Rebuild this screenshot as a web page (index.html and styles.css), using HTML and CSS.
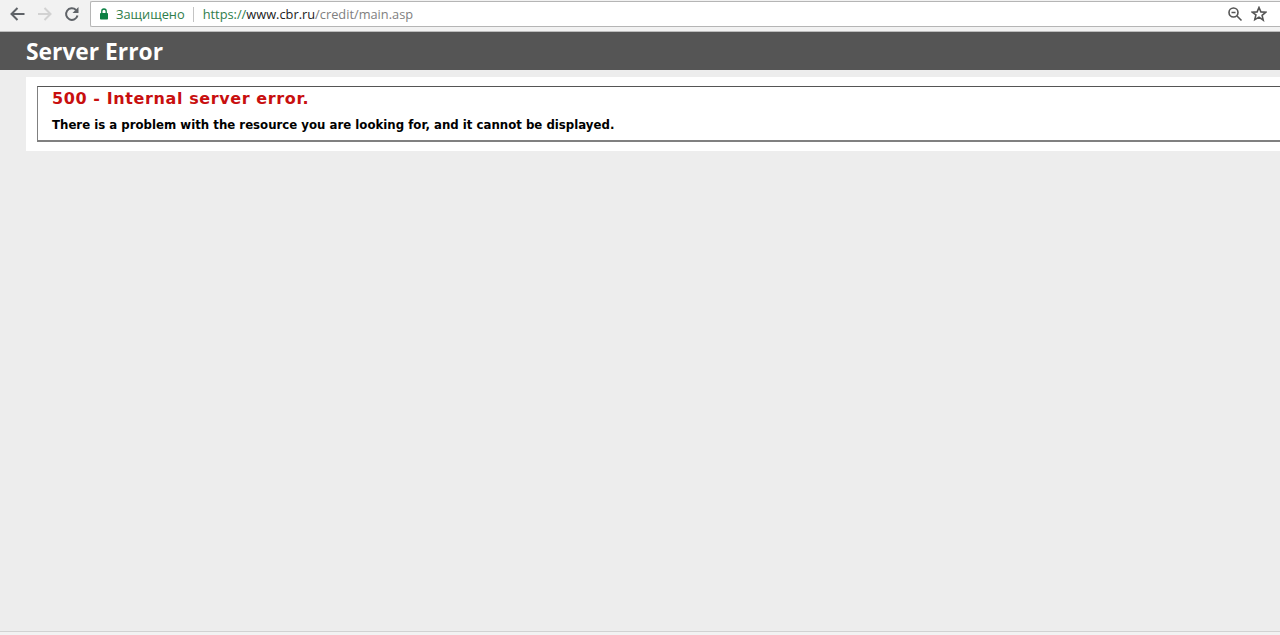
FILE: index.html
```html
<!DOCTYPE html>
<html lang="en">
<head>
<meta charset="utf-8">
<title>Server Error</title>
<link rel="stylesheet" href="styles.css">
</head>
<body>
<div class="toolbar">
  <svg class="nav-icon" width="16" height="16" viewBox="0 0 16 16"><path d="M15.500 8H3M8.500 2L2.500 8l6 6" fill="none" stroke="#5f6368" stroke-width="2"/></svg>
  <svg class="nav-icon" width="16" height="16" viewBox="0 0 16 16"><path d="M1 8h12M7.500 2l6 6-6 6" fill="none" stroke="#d2d2d2" stroke-width="2"/></svg>
  <svg class="nav-icon reload" width="16" height="16" viewBox="0 0 16 16"><path d="M13.500 9.500A5.800 5.800 0 1 1 12 4" fill="none" stroke="#5f6368" stroke-width="2"/><path d="M14.500 1v6h-6z" fill="#5f6368"/></svg>
  <div class="omnibox">
    <svg class="lock" width="10" height="12" viewBox="0 0 10 12"><path d="M2.800 5V3.200a2.200 2.200 0 0 1 4.400 0V5" fill="none" stroke="#0b8043" stroke-width="1.300"/><rect x="1" y="5" width="8" height="6.500" rx=".8" fill="#0b8043"/></svg>
    <span class="secure">Защищено</span>
    <span class="url"><span class="scheme">https://</span><span class="host">www.cbr.ru</span><span class="path">/credit/main.asp</span></span>
    <svg class="end-icon" width="16" height="16" viewBox="0 0 16 16"><circle cx="6.500" cy="6.500" r="4.500" fill="none" stroke="#555" stroke-width="1.600"/><path d="M10 10l4.500 4.500M4.500 6.500h4" stroke="#555" stroke-width="1.600"/></svg>
    <svg class="end-icon" width="16" height="16" viewBox="0 0 16 16"><path d="M8 1.500l1.900 4.400 4.800.4-3.600 3.100 1.100 4.700L8 11.100l-4.200 2.500 1.100-4.700L1.300 6.300l4.800-.4z" fill="none" stroke="#555" stroke-width="1.600"/></svg>
  </div>
</div>
<div class="header"><h1>Server Error</h1></div>
<div class="content">
  <div class="panel">
    <div class="box">
      <h2>500 - Internal server error.</h2>
      <h3>There is a problem with the resource you are looking for, and it cannot be displayed.</h3>
    </div>
  </div>
</div>
<div class="footer-line"></div>
</body>
</html>
```
FILE: styles.css
```css
html, body { margin: 0; height: 100%; overflow: hidden; }
body { background: #ededed; display: flex; flex-direction: column; }
.toolbar { height: 28px; padding-bottom: 3px; background: #f2f2f2; border-bottom: 1px solid #bcbcbc; display: flex; align-items: center; padding-left: 9px; gap: 12px; flex: none; }
.nav-icon { flex: none; }
.reload { margin-left: -1px; }
.omnibox { flex: 1; height: 26px; box-sizing: border-box; margin-left: -2px; background: #fff; border: 1px solid #b5b5b5; border-radius: 2px 0 0 2px; border-right: 0; display: flex; align-items: center; padding: 0 13px 0 8px; font: 12.800px "Open Sans", "Noto Sans", sans-serif; }
.lock { flex: none; margin-right: 7px; }
.secure { color: #2f7d4a; padding-right: 8px; border-right: 1px solid #c4c4c4; margin-right: 9px; line-height: 15px; }
.url { flex: 1; }
.scheme { color: #2f7d4a; }
.host { color: #222; }
.path { color: #808080; }
.end-icon { flex: none; margin-left: 8px; }
.header { height: 38px; background: #555; flex: none; display: flex; align-items: center; padding-left: 26px; }
h1 { margin: 0; color: #fff; font: 700 22.800px "Open Sans", "DejaVu Sans", sans-serif; }
.content { flex: 1; padding: 7px 0 0 26px; }
.panel { background: #fff; padding: 9px 0 9px 11px; }
.box { border: 1px solid #555; border-left-color: #808080; border-bottom: 2px solid #808080; border-right: 0; height: 53px; padding-left: 14px; font-family: "DejaVu Sans", Verdana, sans-serif; }
h2 { margin: 0; padding-top: 3px; color: #c80f0f; font-size: 16px; letter-spacing: .6px; line-height: 18px; font-weight: 700; }
h3 { margin: 0; padding-top: 10px; color: #000; font-size: 11.750px; line-height: 14px; font-weight: 700; }
.footer-line { height: 4px; background: #f2f2f2; border-top: 1px solid #d2d2d2; flex: none; box-sizing: border-box; }
```
